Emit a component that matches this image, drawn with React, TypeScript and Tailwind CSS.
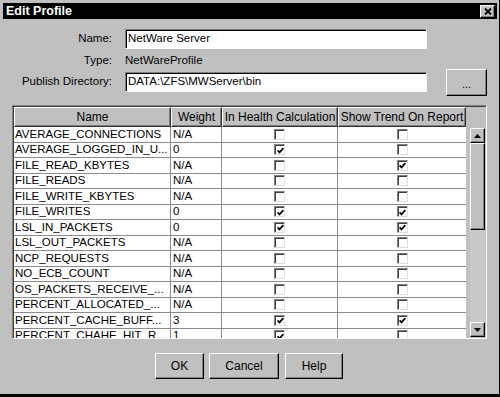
import React from "react";

const rows: [string, string, boolean, boolean][] = [
  ["AVERAGE_CONNECTIONS", "N/A", false, false],
  ["AVERAGE_LOGGED_IN_U...", "0", true, false],
  ["FILE_READ_KBYTES", "N/A", false, true],
  ["FILE_READS", "N/A", false, false],
  ["FILE_WRITE_KBYTES", "N/A", false, false],
  ["FILE_WRITES", "0", true, true],
  ["LSL_IN_PACKETS", "0", true, true],
  ["LSL_OUT_PACKETS", "N/A", false, false],
  ["NCP_REQUESTS", "N/A", false, false],
  ["NO_ECB_COUNT", "N/A", false, false],
  ["OS_PACKETS_RECEIVE_...", "N/A", false, false],
  ["PERCENT_ALLOCATED_...", "N/A", false, false],
  ["PERCENT_CACHE_BUFF...", "3", true, true],
  ["PERCENT_CHAHE_HIT_R...", "1", true, false],
];

const raised =
  "bg-[#c0c0c0] border border-t-white border-l-white border-r-black border-b-black shadow-[inset_-1px_-1px_0_#808080]";
const sunken =
  "bg-white border border-t-[#808080] border-l-[#808080] border-r-white border-b-white shadow-[inset_1px_1px_0_#000]";

function Check({ checked }: { checked: boolean }) {
  return (
    <div className="w-[11px] h-[11px] bg-white border border-t-[#808080] border-l-[#808080] border-r-[#dfdfdf] border-b-[#dfdfdf] shadow-[inset_1px_1px_0_#404040] flex items-center justify-center">
      {checked && (
        <svg width="7" height="7" viewBox="0 0 7 7" className="ml-[1px] mt-[1px]">
          <path d="M0.6 3.4 L2.5 5.4 L6.4 1.2" stroke="#000" strokeWidth="1.7" fill="none" />
        </svg>
      )}
    </div>
  );
}

function Arrow({ up }: { up: boolean }) {
  return (
    <svg width="7" height="4" viewBox="0 0 7 4">
      {up ? <path d="M0 4 L3.5 0 L7 4 Z" fill="#000" /> : <path d="M0 0 L3.5 4 L7 0 Z" fill="#000" />}
    </svg>
  );
}

export default function App() {
  return (
    <div className="w-[500px] h-[397px] box-border bg-[#c0c0c0] pt-[3px] pl-[3px] pr-[2px] border-r border-b-[3px] border-black flex flex-col font-['Liberation_Sans',Arial,sans-serif] text-black overflow-hidden">
      {/* Title bar */}
      <div className="h-[16px] bg-black flex items-center justify-between pl-[3px] pr-[2px]">
        <span className="text-white font-bold text-[12.5px] leading-none">Edit Profile</span>
        <div className={`${raised} w-[15px] h-[13px] flex items-center justify-center`}>
          <svg width="8" height="7" viewBox="0 0 8 7">
            <path d="M1 0.5 L7 6.5 M7 0.5 L1 6.5" stroke="#000" strokeWidth="1.8" />
          </svg>
        </div>
      </div>

      {/* Form */}
      <div className="mt-[10px] flex flex-col text-[11.5px]">
        <div className="flex items-center h-[20px]">
          <div className="w-[109px] text-right">Name:</div>
          <div className={`${sunken} ml-[13px] w-[302px] h-[20px] flex items-center pl-[2px]`}>NetWare Server</div>
        </div>
        <div className="flex items-center h-[23px] pt-[1px]">
          <div className="w-[109px] text-right">Type:</div>
          <div className="ml-[13px]">NetWareProfile</div>
        </div>
        <div className="flex items-start h-[24px]">
          <div className="w-[109px] text-right h-[20px] flex items-center justify-end">Publish Directory:</div>
          <div className={`${sunken} ml-[13px] w-[302px] h-[20px] flex items-center pl-[2px]`}>DATA:\ZFS\MWServer\bin</div>
          <div className={`${raised} ml-[19px] -mt-[3px] w-[41px] h-[27px] flex items-center justify-center text-[11px]`}>
            <span className="mt-[4px]">...</span>
          </div>
        </div>
      </div>

      {/* Table */}
      <div className="mt-[9px] ml-[9px] w-[475px] h-[234px] box-border border border-t-[#808080] border-l-[#808080] border-r-white border-b-white shadow-[inset_1px_1px_0_#404040] pt-[1px] pl-[1px] flex">
        <div className="w-[452px] flex flex-col overflow-hidden">
          <div className="grid grid-cols-[157px_51px_116px_128px] h-[20px] text-[12px]">
            {["Name", "Weight", "In Health Calculation", "Show Trend On Report"].map((h) => (
              <div
                key={h}
                className="bg-[#c0c0c0] border border-t-white border-l-white border-r-[#303030] border-b-[#303030] shadow-[inset_-1px_-1px_0_#808080] flex items-center justify-center whitespace-nowrap overflow-hidden"
              >
                {h}
              </div>
            ))}
          </div>
          <div className="flex-1 overflow-hidden bg-white">
            {rows.map(([name, w, a, b]) => (
              <div
                key={name}
                className="grid grid-cols-[157px_51px_116px_128px] h-[15.5px] box-border border-b border-[#8c8c8c] text-[11.5px]"
              >
                <div className="border-r border-[#8c8c8c] pl-[1px] flex items-center whitespace-nowrap overflow-hidden">{name}</div>
                <div className="border-r border-[#8c8c8c] pl-[2px] flex items-center whitespace-nowrap overflow-hidden">{w}</div>
                <div className="border-r border-[#8c8c8c] flex items-center justify-center">
                  <Check checked={a} />
                </div>
                <div className="flex items-center justify-center">
                  <Check checked={b} />
                </div>
              </div>
            ))}
          </div>
        </div>
        {/* Scrollbar */}
        <div className="w-[19px] flex flex-col pl-[4px] pb-[1px]">
          <div className="h-[21px]" />
          <div className={`${raised} w-[15px] h-[15px] flex items-center justify-center`}>
            <Arrow up />
          </div>
          <div className={`${raised} w-[15px] h-[87px]`} />
          <div className="flex-1 bg-[#c8c8c8]" />
          <div className={`${raised} w-[15px] h-[15px] flex items-center justify-center`}>
            <Arrow up={false} />
          </div>
        </div>
      </div>

      {/* Buttons */}
      <div className="mt-[14px] ml-[152px] flex text-[12px]">
        <div className={`${raised} w-[49px] h-[26px] flex items-center justify-center`}>OK</div>
        <div className={`${raised} ml-[5px] w-[70px] h-[26px] flex items-center justify-center`}>Cancel</div>
        <div className={`${raised} ml-[6px] w-[58px] h-[26px] flex items-center justify-center`}>Help</div>
      </div>
    </div>
  );
}
